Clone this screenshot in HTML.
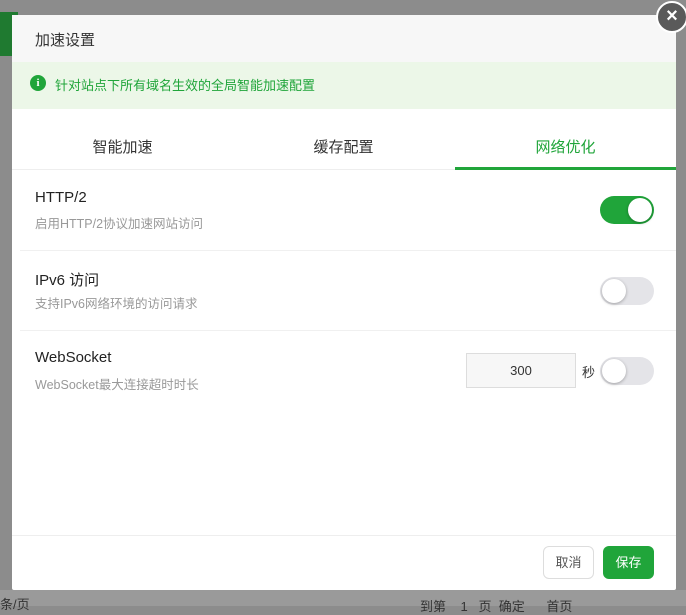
<!DOCTYPE html>
<html><head><meta charset="utf-8"><style>
*{margin:0;padding:0;box-sizing:border-box}
body{width:686px;height:606px;background:#8c8c8c;position:relative;overflow:hidden;font-family:"Liberation Sans","Noto Sans CJK SC",sans-serif}
.a{position:absolute}
.dlg{left:12px;top:15px;width:664px;height:575px;background:#fff;border-radius:2px}
.t{font-size:15px;color:#333}
.sw{width:54px;height:28px;border-radius:14px;background:#e4e4e8}
.sw i{position:absolute;top:2px;left:2px;width:24px;height:24px;border-radius:50%;background:#fff;box-shadow:0 1px 3px rgba(0,0,0,.3)}
.sw.on{background:#20a53a}.sw.on i{left:28px}
.h{font-size:15px;color:#222}.d{font-size:12.5px;color:#999}
.sep{height:1px;background:#f0f0f0}
</style></head><body>
<div class="a" style="left:0;top:12px;width:18px;height:44px;background:#1f7a30"></div>
<div class="a" style="left:0;top:590px;width:686px;height:16px;background:#9a9a9a"></div>
<div class="a" style="left:0;top:594px;font-size:13px;color:#333">条/页</div>
<div class="a" style="left:420px;top:596px;font-size:13px;color:#333">到第 &nbsp;&nbsp; 1 &nbsp;&nbsp;页 &nbsp;确定 &nbsp;&nbsp;&nbsp;&nbsp;&nbsp;首页</div>
<div class="a dlg"></div>
<div class="a" style="left:12px;top:15px;width:664px;height:47px;background:#f7f7f7"></div>
<div class="a t" style="left:35px;top:29px">加速设置</div>
<div class="a" style="left:12px;top:62px;width:664px;height:47px;background:#ecf7e8"></div>
<div class="a" style="left:30px;top:75px;width:16px;height:16px;border-radius:50%;background:#20a53a;color:#fff;font-size:11px;font-weight:bold;text-align:center;line-height:16px;font-family:'Liberation Serif',serif">i</div>
<div class="a" style="left:55px;top:75px;font-size:13px;color:#20a53a">针对站点下所有域名生效的全局智能加速配置</div>
<div class="a" style="left:12px;top:136px;width:221px;text-align:center;font-size:15px;color:#333">智能加速</div>
<div class="a" style="left:233px;top:136px;width:221px;text-align:center;font-size:15px;color:#333">缓存配置</div>
<div class="a" style="left:455px;top:136px;width:221px;text-align:center;font-size:15px;color:#20a53a">网络优化</div>
<div class="a" style="left:12px;top:169px;width:664px;height:1px;background:#eee"></div>
<div class="a" style="left:455px;top:167px;width:221px;height:3px;background:#20a53a"></div>

<div class="a h" style="left:35px;top:189px">HTTP/2</div>
<div class="a d" style="left:35px;top:213px">启用HTTP/2协议加速网站访问</div>
<div class="a sw on" style="left:600px;top:196px"><i></i></div>
<div class="a sep" style="left:20px;top:250px;width:656px"></div>
<div class="a h" style="left:35px;top:269px">IPv6 访问</div>
<div class="a d" style="left:35px;top:293px">支持IPv6网络环境的访问请求</div>
<div class="a sw" style="left:600px;top:277px"><i></i></div>
<div class="a sep" style="left:20px;top:330px;width:656px"></div>
<div class="a h" style="left:35px;top:349px">WebSocket</div>
<div class="a d" style="left:35px;top:374px">WebSocket最大连接超时时长</div>
<div class="a" style="left:466px;top:353px;width:110px;height:35px;border:1px solid #ddd;background:#f7f7f7;text-align:center;line-height:33px;font-size:13px;color:#333">300</div>
<div class="a" style="left:582px;top:362px;font-size:13px;color:#333">秒</div>
<div class="a sw" style="left:600px;top:357px"><i></i></div>

<div class="a" style="left:12px;top:535px;width:664px;height:1px;background:#eee"></div>
<div class="a" style="left:543px;top:546px;width:51px;height:33px;border:1px solid #ddd;border-radius:6px;text-align:center;line-height:31px;font-size:13px;color:#555">取消</div>
<div class="a" style="left:603px;top:546px;width:51px;height:33px;background:#20a53a;border-radius:6px;text-align:center;line-height:33px;font-size:13px;color:#fff">保存</div>

<div class="a" style="left:656px;top:1px;width:32px;height:32px;border-radius:50%;background:#5a5a5a;border:2px solid #fff;color:#fff;text-align:center;line-height:27px;font-size:20px;font-weight:bold">×</div>
</body></html>
